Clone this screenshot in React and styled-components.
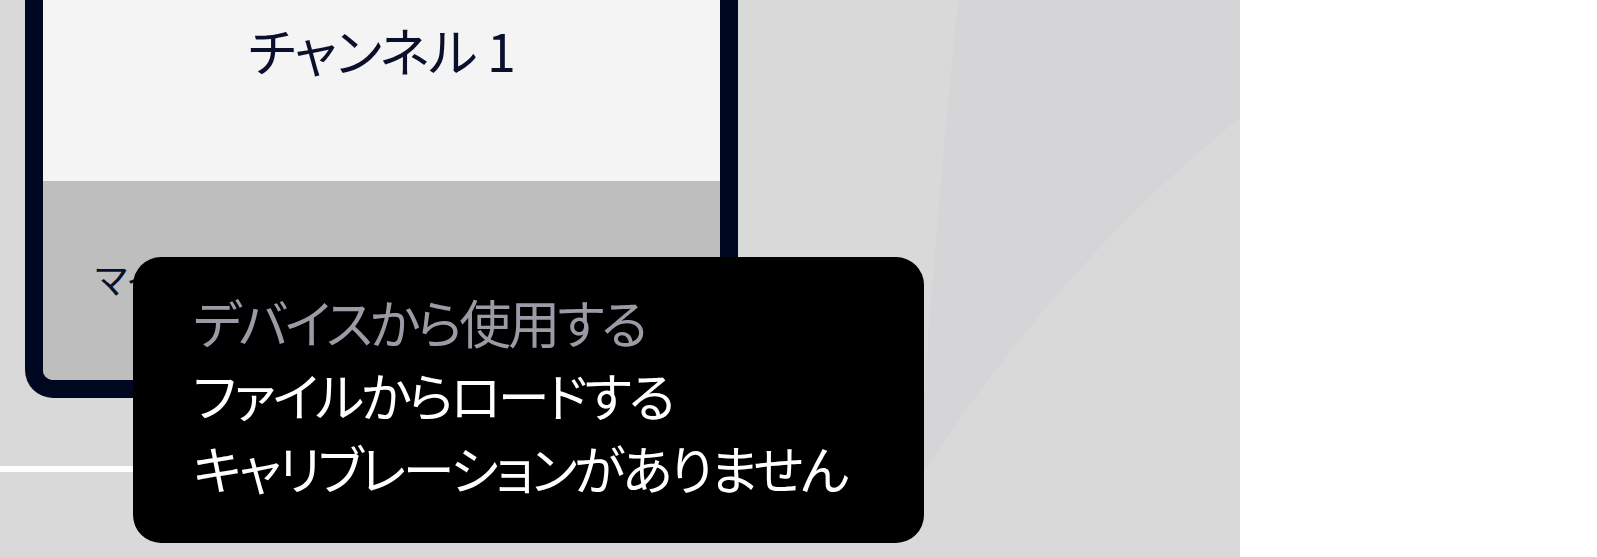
import React from "react";
import styled, { createGlobalStyle } from "styled-components";

const GlobalStyle = createGlobalStyle`
  html, body {
    margin: 0;
    padding: 0;
    background: #ffffff;
  }
  body {
    font-family: "Noto Sans CJK JP", "Noto Sans", sans-serif;
    overflow: hidden;
  }
`;

const Page = styled.div`
  display: flex;
  width: 1597px;
  height: 557px;
`;

const Stage = styled.div`
  position: relative;
  width: 1240px;
  height: 557px;
  background: #d9d9d9;
  overflow: hidden;
  display: flex;
  flex-direction: column;
  align-items: flex-start;
`;

const Decoration = styled.svg`
  position: absolute;
  inset: 0;
  pointer-events: none;
`;

const Card = styled.div`
  position: relative;
  box-sizing: border-box;
  width: 713px;
  margin-left: 25px;
  border: 18px solid #000821;
  border-top: 0;
  border-radius: 0 0 28px 28px;
  overflow: hidden;
  display: flex;
  flex-direction: column;
`;

const CardHead = styled.div`
  height: 181px;
  background: #f4f4f4;
  display: flex;
  justify-content: center;
  align-items: flex-start;
  box-sizing: border-box;
  padding-top: 14px;
`;

const Title = styled.span`
  font-size: 52px;
  line-height: 1.4;
  color: #0a0f2c;
  font-feature-settings: "palt";
  letter-spacing: -1px;
`;

const CardBody = styled.div`
  height: 199px;
  background: #bebebf;
  box-sizing: border-box;
  padding: 76px 0 0 52px;
`;

const Source = styled.span`
  font-size: 36px;
  line-height: 1.2;
  color: #0a0f2c;
  font-feature-settings: "palt";
`;

const Divider = styled.div`
  width: 700px;
  height: 6px;
  margin-top: 68px;
  background: #ffffff;
`;

const Menu = styled.ul`
  position: absolute;
  left: 133px;
  top: 257px;
  box-sizing: border-box;
  width: 791px;
  height: 286px;
  margin: 0;
  padding: 28px 0 0 60px;
  list-style: none;
  background: #000000;
  border-radius: 28px;
`;

const MenuItem = styled.li`
  font-size: 52px;
  line-height: 73px;
  height: 73px;
  color: ${(p) => (p.$disabled ? "#9b9ba5" : "#ffffff")};
  font-feature-settings: "palt";
  letter-spacing: -3px;
  white-space: nowrap;
`;

const items = [
  { label: "デバイスから使用する", disabled: true },
  { label: "ファイルからロードする" },
  { label: "キャリブレーションがありません" },
];

export default function App() {
  return (
    <>
      <GlobalStyle />
      <Page>
        <Stage>
          <Decoration width="1240" height="557" viewBox="0 0 1240 557">
            <path
              d="M958 0 L1240 0 L1240 118 Q1060 262 918 480 Q934 240 958 0 Z"
              fill="#d5d4d7"
            />
          </Decoration>
          <Card>
            <CardHead>
              <Title>チャンネル 1</Title>
            </CardHead>
            <CardBody>
              <Source>マイク</Source>
            </CardBody>
          </Card>
          <Divider />
          <Menu>
            {items.map((it) => (
              <MenuItem key={it.label} $disabled={it.disabled}>
                {it.label}
              </MenuItem>
            ))}
          </Menu>
        </Stage>
      </Page>
    </>
  );
}
